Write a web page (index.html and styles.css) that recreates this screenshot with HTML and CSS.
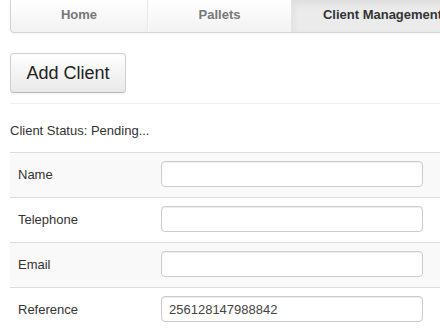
FILE: index.html
```html
<!DOCTYPE html>
<html lang="en">
<head>
    <meta charset="UTF-8">
    <meta name="viewport" content="width=device-width, initial-scale=1.0">
    <title>Client Management</title>
    <link rel="stylesheet" href="styles.css">
</head>
<body>
    <div class="page">
        <ul class="nav">
            <li class="tab tab-home">Home</li>
            <li class="tab tab-pallets">Pallets</li>
            <li class="tab tab-clients active">Client Management</li>
        </ul>

        <button type="button" class="btn">Add Client</button>

        <hr class="divider">

        <p class="status">Client Status: Pending...</p>

        <form class="client-form">
            <div class="form-row striped">
                <label for="name">Name</label>
                <input type="text" id="name" name="name">
            </div>
            <div class="form-row">
                <label for="telephone">Telephone</label>
                <input type="tel" id="telephone" name="telephone">
            </div>
            <div class="form-row striped">
                <label for="email">Email</label>
                <input type="email" id="email" name="email">
            </div>
            <div class="form-row">
                <label for="reference">Reference</label>
                <input type="text" id="reference" name="reference" value="256128147988842">
            </div>
        </form>
    </div>
</body>
</html>
```

FILE: styles.css
```css
html, body {
    margin: 0;
    overflow: hidden;
}

body {
    font-family: "Liberation Sans", Arial, sans-serif;
    font-size: 13px;
    color: #333;
    background: #fff;
    padding-left: 10px;
}

.page {
    width: 464px;
}

.nav {
    display: flex;
    margin: 0;
    padding: 0;
    list-style: none;
    height: 32px;
    border: 1px solid #d4d4d4;
    border-top: none;
    border-radius: 0 0 4px 4px;
    background: linear-gradient(#ffffff, #f2f2f2);
    box-shadow: 0 1px 3px rgba(0, 0, 0, 0.06);
}

.tab {
    line-height: 30px;
    text-align: center;
    font-weight: bold;
    color: #777;
    border-right: 1px solid #e5e5e5;
    box-shadow: 1px 0 0 #fff;
}

.tab-home {
    width: 136px;
}

.tab-pallets {
    width: 143px;
}

.tab-clients {
    flex: 1;
    border-right: none;
}

.active {
    color: #333;
    background: #ebebeb;
    box-shadow: inset 0 3px 8px rgba(0, 0, 0, 0.07);
}

.btn {
    display: block;
    margin-top: 20px;
    width: 116px;
    height: 40px;
    padding: 0;
    font-family: "Liberation Sans", Arial, sans-serif;
    font-size: 18px;
    color: #222;
    background: linear-gradient(#ffffff, #e9e9e9);
    border: 1px solid #d0d0d0;
    border-bottom-color: #b8b8b8;
    border-radius: 4px;
    box-shadow: 0 1px 2px rgba(0, 0, 0, 0.06);
}

.divider {
    margin: 10px 0 0;
    border: none;
    border-top: 1px solid #eeeeee;
    height: 0;
}

.status {
    margin: 18px 0 12px;
    line-height: 18px;
}

.client-form {
    margin: 0;
}

.form-row {
    display: flex;
    align-items: center;
    border-top: 1px solid #dddddd;
    padding: 8px 0 10px;
}

.form-row.striped {
    background: #f9f9f9;
}

.form-row label {
    width: 143px;
    padding-left: 8px;
}

.form-row input {
    box-sizing: border-box;
    width: 262px;
    height: 26px;
    padding: 0 7px;
    font-family: "Liberation Sans", Arial, sans-serif;
    font-size: 13px;
    color: #444;
    background: #fff;
    border: 1px solid #cccccc;
    border-radius: 4px;
    box-shadow: inset 0 1px 1px rgba(0, 0, 0, 0.075);
}
```
